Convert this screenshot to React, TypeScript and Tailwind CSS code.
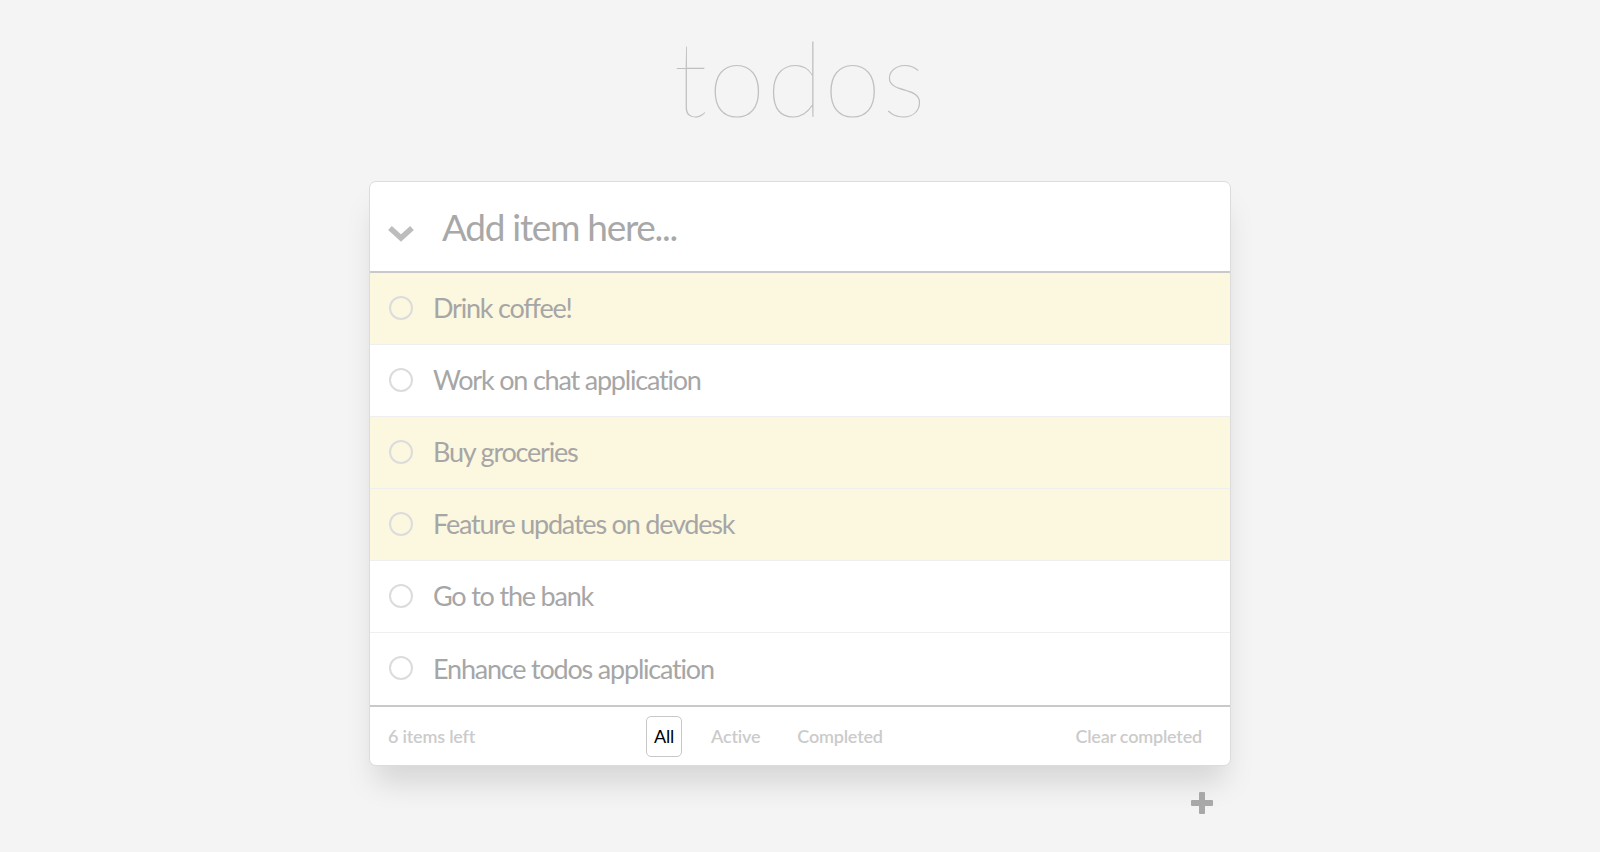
import React, { useState } from 'react';

type Todo = {
  id: number;
  text: string;
  done: boolean;
  highlight: boolean;
};

type Filter = 'all' | 'active' | 'completed';

const initialTodos: Todo[] = [
  { id: 1, text: 'Drink coffee!', done: false, highlight: true },
  { id: 2, text: 'Work on chat application', done: false, highlight: false },
  { id: 3, text: 'Buy groceries', done: false, highlight: true },
  { id: 4, text: 'Feature updates on devdesk', done: false, highlight: true },
  { id: 5, text: 'Go to the bank', done: false, highlight: false },
  { id: 6, text: 'Enhance todos application', done: false, highlight: false },
];

const ChevronDown = () => (
  <svg width="28" height="20" viewBox="0 0 28 20" fill="none">
    <polyline points="3,5 14,15 25,5" stroke="#bdbdbd" strokeWidth="5.5" strokeLinejoin="miter" />
  </svg>
);

const PlusIcon = () => (
  <svg width="24" height="24" viewBox="0 0 24 24">
    <rect x="9" y="1" width="6" height="22" rx="1" fill="#a8a8a8" />
    <rect x="1" y="9" width="22" height="6" rx="1" fill="#a8a8a8" />
  </svg>
);

export default function App() {
  const [todos, setTodos] = useState<Todo[]>(initialTodos);
  const [filter, setFilter] = useState<Filter>('all');
  const [draft, setDraft] = useState('');

  const visible = todos.filter((t) => {
    if (filter === 'active') return !t.done;
    if (filter === 'completed') return t.done;
    return true;
  });

  const left = todos.filter((t) => !t.done).length;

  const toggle = (id: number) =>
    setTodos(todos.map((t) => (t.id === id ? { ...t, done: !t.done } : t)));

  const handleSubmit = (e: React.FormEvent) => {
    e.preventDefault();
    if (!draft.trim()) return;
    setTodos([...todos, { id: Date.now(), text: draft.trim(), done: false, highlight: false }]);
    setDraft('');
  };

  const filterClass = (f: Filter) =>
    filter === f
      ? 'border-[#c8c8c8] text-black font-normal'
      : 'border-transparent text-[#cbcbcb] hover:text-[#aaa]';

  return (
    <div
      className="min-h-[852px] w-full bg-[#f4f4f4] flex flex-col items-center"
      style={{ fontFamily: 'Lato, "Open Sans", sans-serif' }}
    >
      {/* Title */}
      <h1 className="mt-[17px] text-[104px] leading-[120px] font-extralight text-[#c0c0c0] tracking-[1px]">
        todos
      </h1>

      {/* Card */}
      <div className="mt-[44px] w-[862px] bg-white border border-[#dcdcdc] rounded-[7px] shadow-[0_22px_30px_-6px_rgba(0,0,0,0.13)]">
        {/* Input */}
        <form
          onSubmit={handleSubmit}
          className="h-[91px] flex items-center border-b-2 border-[#c9c9c9]"
        >
          <div className="w-[72px] pl-[17px] pt-[12px] flex items-center">
            <ChevronDown />
          </div>
          <input
            value={draft}
            onChange={(e) => setDraft(e.target.value)}
            placeholder="Add item here..."
            className="flex-1 bg-transparent outline-none text-[37px] font-normal tracking-[-1.3px] text-[#777] placeholder:text-[#a8a8a8] pr-4"
          />
        </form>

        {/* List */}
        <ul>
          {visible.map((todo) => (
            <li
              key={todo.id}
              className={`h-[72px] flex items-center border-b border-[#efefef] last:border-b-0 ${
                todo.highlight ? 'bg-[#fcf7df]' : 'bg-white'
              }`}
            >
              <button
                onClick={() => toggle(todo.id)}
                className="ml-[19px] w-[24px] h-[24px] rounded-full border-[2.5px] border-[#dcdcdc] shrink-0 mb-[2px]"
              />
              <span
                className={`ml-[20px] text-[27px] font-normal tracking-[-1.2px] ${
                  todo.done ? 'text-[#d0d0d0] line-through' : 'text-[#a6a6a6]'
                }`}
              >
                {todo.text}
              </span>
            </li>
          ))}
        </ul>

        {/* Footer */}
        <div className="h-[60px] border-t-2 border-[#c9c9c9] flex items-center pl-[18px] pr-[28px] text-[18px] font-semibold text-[#cbcbcb] tracking-[-0.2px]">
          <span className="w-[258px]">{left} items left</span>
          <div className="flex items-center gap-[21px]">
            <button
              onClick={() => setFilter('all')}
              className={`h-[41px] px-[7px] border rounded-[5px] ${filterClass('all')}`}
            >
              All
            </button>
            <button
              onClick={() => setFilter('active')}
              className={`h-[41px] px-[7px] border rounded-[5px] ${filterClass('active')}`}
            >
              Active
            </button>
            <button
              onClick={() => setFilter('completed')}
              className={`h-[41px] px-[7px] border rounded-[5px] ${filterClass('completed')}`}
            >
              Completed
            </button>
          </div>
          <button
            onClick={() => setTodos(todos.filter((t) => !t.done))}
            className="ml-auto text-[#cbcbcb] hover:text-[#aaa]"
          >
            Clear completed
          </button>
        </div>
      </div>

      {/* Add button */}
      <div className="w-[862px] flex justify-end pr-[17px] mt-[25px]">
        <button className="p-0">
          <PlusIcon />
        </button>
      </div>
    </div>
  );
}
